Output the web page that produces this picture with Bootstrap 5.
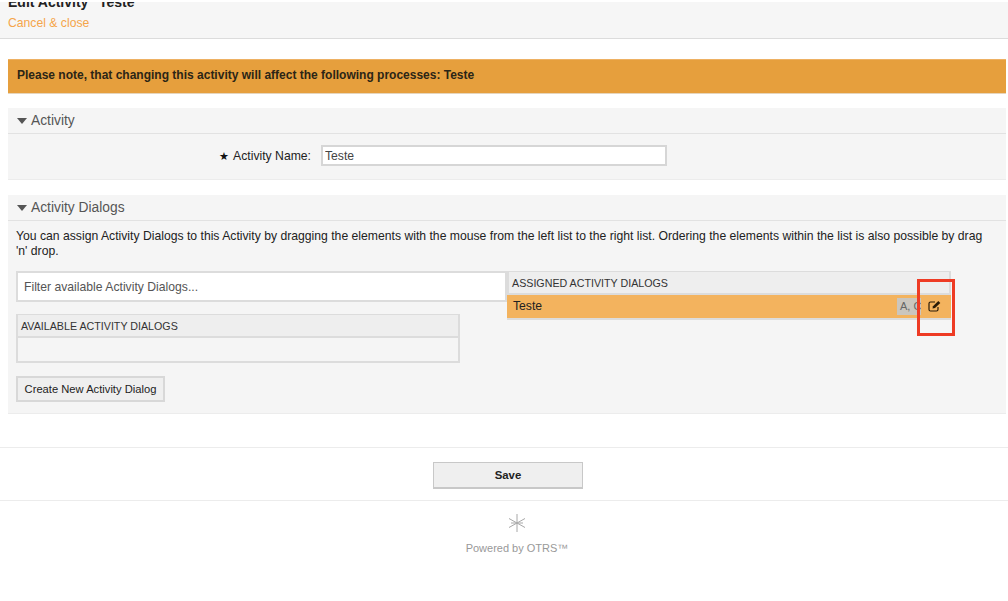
<!DOCTYPE html>
<html lang="en">
<head>
    <meta charset="UTF-8">
    <meta name="viewport" content="width=device-width, initial-scale=1.0">
    <title>Edit Activity</title>
    <link href="https://cdn.jsdelivr.net/npm/bootstrap@5.3.0/dist/css/bootstrap.min.css" rel="stylesheet">
    <style>
        body {
            font-family: "Liberation Sans", Arial, sans-serif;
            font-size: 12.2px;
            color: #222;
            background: #fff;
            min-height: 601px;
            overflow: hidden;
            position: relative;
        }
        .page-head {
            height: 39px;
            background: #f6f6f6;
            border-top: 2px solid #fff;
            border-bottom: 1px solid #dcdcdc;
            padding: 0 8px;
            overflow: hidden;
        }
        .page-title {
            font-size: 14px;
            font-weight: 700;
            line-height: 18px;
            margin: -9px 0 0;
            color: #222;
        }
        .cancel-link {
            display: block;
            margin-top: 4px;
            line-height: 16px;
            color: #f5a54a;
            text-decoration: none;
        }
        .note-bar {
            margin: 20px 2px 14px 8px;
            height: 35px;
            padding: 0 9px;
            background: #e69f3d;
            border-top: 1px solid #eeb163;
            border-bottom: 1px solid #e6d5bc;
            font-size: 12px;
            font-weight: 700;
            line-height: 31px;
            color: #2b2516;
        }
        .panel-box {
            margin: 0 2px 15px 8px;
            background: #f5f5f5;
            border-bottom: 1px solid #ececec;
        }
        .panel-head {
            height: 26px;
            padding-left: 9px;
            padding-top: 1px;
            border-bottom: 1px solid #e2e2e2;
            font-size: 13.8px;
            line-height: 24px;
            color: #555;
        }
        .tri-down {
            width: 0;
            height: 0;
            border-left: 5.5px solid transparent;
            border-right: 5.5px solid transparent;
            border-top: 6px solid #555;
        }
        .name-row {
            height: 45px;
            padding-top: 11px;
        }
        .name-label {
            width: 313px;
            padding-right: 10px;
            text-align: right;
            line-height: 23px;
        }
        .req-star {
            font-size: 11px;
            color: #111;
            margin-right: 1px;
        }
        .name-input {
            width: 346px;
            height: 21px;
            padding: 0 2px;
            border: 2px solid #d6d6d6;
            background: #fff;
            font-size: 12.2px;
            color: #444;
            outline: 0;
        }
        .dialogs-body {
            height: 192px;
            padding: 8px 8px 0;
        }
        .help-text {
            line-height: 15px;
            margin: 0 0 12px;
            padding-right: 8px;
            color: #222;
            font-size: 12.2px;
        }
        .left-col {
            width: 491px;
        }
        .right-col {
            width: 444px;
        }
        .filter-input {
            width: 100%;
            height: 31px;
            padding: 0 6px;
            border: 2px solid #dcdcdc;
            background: #fff;
            font-size: 12.2px;
            outline: 0;
        }
        .filter-input::placeholder {
            color: #555;
            opacity: 1;
        }
        .list-box {
            border: 2px solid #dcdcdc;
            border-top-width: 1px;
            background: #f5f5f5;
        }
        .list-title {
            height: 23px;
            padding-left: 3px;
            background: #eeeeee;
            border-bottom: 2px solid #dcdcdc;
            font-size: 10.7px;
            line-height: 22px;
            color: #333;
        }
        .list-avail {
            width: 444px;
            margin-top: 12px;
        }
        .list-empty {
            height: 23px;
        }
        .assigned-row {
            height: 23px;
            margin: 0 -2px;
            padding-left: 6px;
            background: #f3b35e;
            line-height: 23px;
            color: #222;
        }
        .assigned-tag {
            width: 24px;
            height: 17px;
            margin-right: 7px;
            padding-left: 3px;
            overflow: hidden;
            background: #cbc6be;
            color: #666;
            font-size: 11px;
            line-height: 17px;
            white-space: nowrap;
        }
        .edit-ico {
            margin-right: 10px;
            margin-top: -1px;
        }
        .btn-create {
            display: block;
            margin-top: 13px;
            width: 149px;
            height: 26px;
            padding: 0;
            border: 2px solid #d8d8d8;
            border-radius: 0;
            background: #efefef;
            font-size: 11.2px;
            line-height: 22px;
            color: #222;
        }
        .save-wrap {
            margin-top: 33px;
            height: 54px;
            border-top: 1px solid #ececec;
            border-bottom: 1px solid #ececec;
            padding-top: 14px;
            padding-left: 8px;
        }
        .btn-save {
            width: 150px;
            height: 27px;
            padding: 0;
            border: 1px solid #c8c8c8;
            border-bottom-width: 2px;
            border-radius: 0;
            background: #efefef;
            font-size: 11.4px;
            font-weight: 700;
            line-height: 24px;
            color: #222;
        }
        .foot-wrap {
            padding-top: 13px;
            padding-left: 26px;
            color: #999;
            font-size: 11px;
        }
        .foot-text {
            margin-top: 9px;
            line-height: 14px;
        }
        .red-mark {
            position: absolute;
            left: 917px;
            top: 279px;
            width: 38px;
            height: 57px;
            border: 3px solid #ee3b24;
        }
    </style>
</head>
<body>
    <div class="page-head">
        <h1 class="page-title">Edit Activity "Teste"</h1>
        <a class="cancel-link" href="#">Cancel &amp; close</a>
    </div>

    <div class="note-bar">Please note, that changing this activity will affect the following processes: Teste</div>

    <div class="panel-box">
        <div class="panel-head d-flex align-items-center gap-1">
            <span class="tri-down"></span>
            <span>Activity</span>
        </div>
        <div class="name-row d-flex">
            <label class="name-label" for="activityName"><span class="req-star">★</span> Activity Name:</label>
            <input class="name-input" id="activityName" type="text" value="Teste">
        </div>
    </div>

    <div class="panel-box">
        <div class="panel-head d-flex align-items-center gap-1">
            <span class="tri-down"></span>
            <span>Activity Dialogs</span>
        </div>
        <div class="dialogs-body">
            <p class="help-text">You can assign Activity Dialogs to this Activity by dragging the elements with the mouse from the left list to the right list. Ordering the elements within the list is also possible by drag 'n' drop.</p>
            <div class="d-flex align-items-start">
                <div class="left-col">
                    <input class="filter-input" type="text" placeholder="Filter available Activity Dialogs...">
                    <div class="list-box list-avail">
                        <div class="list-title">AVAILABLE ACTIVITY DIALOGS</div>
                        <div class="list-empty"></div>
                    </div>
                    <button class="btn btn-create" type="button">Create New Activity Dialog</button>
                </div>
                <div class="right-col list-box">
                    <div class="list-title">ASSIGNED ACTIVITY DIALOGS</div>
                    <div class="assigned-row d-flex align-items-center">
                        <span class="flex-grow-1">Teste</span>
                        <span class="assigned-tag">A, C</span>
                        <svg class="edit-ico" width="13" height="12" viewBox="0 0 13 12" fill="none" stroke="#2a1c08" stroke-width="1.200">
                            <path d="M10 7v2.500a1.500 1.500 0 0 1-1.500 1.500h-6A1.500 1.500 0 0 1 1 9.500v-6A1.500 1.500 0 0 1 2.500 2H7"/>
                            <path d="M4.500 8.500l.5-2.300L10.300 1l2 2-5.300 5z" fill="#2a1c08" stroke="none"/>
                        </svg>
                    </div>
                </div>
            </div>
        </div>
    </div>

    <div class="save-wrap text-center">
        <button class="btn btn-save" type="button">Save</button>
    </div>

    <div class="foot-wrap text-center">
        <svg width="18" height="18" viewBox="0 0 18 18" stroke="#a8a8a8" stroke-width="1" fill="none">
            <path d="M9 0v18M1 4.500l16 9M17 4.500l-16 9M3 9h12"/>
        </svg>
        <div class="foot-text">Powered by OTRS™</div>
    </div>

    <div class="red-mark"></div>

    <script src="https://cdn.jsdelivr.net/npm/bootstrap@5.3.0/dist/js/bootstrap.bundle.min.js"></script>
</body>
</html>
